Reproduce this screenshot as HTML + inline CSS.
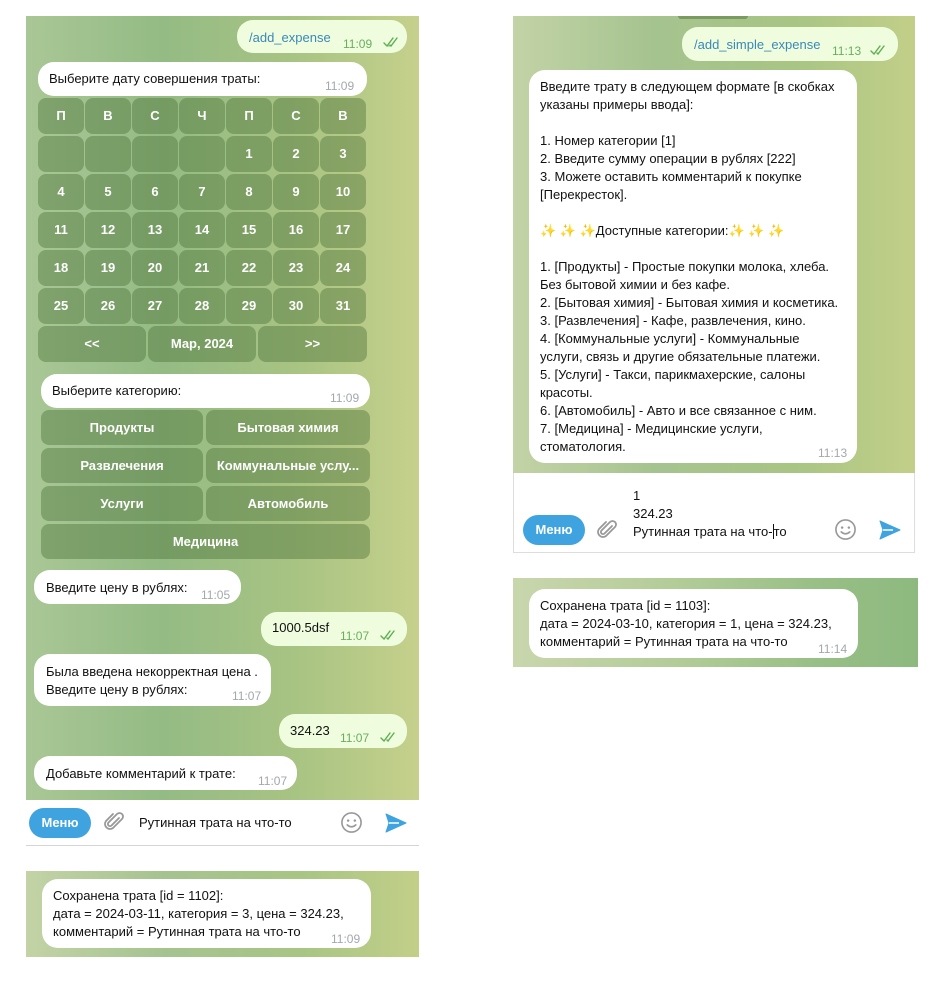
<!DOCTYPE html>
<html><head><meta charset="utf-8"><style>
*{margin:0;padding:0;box-sizing:border-box}
body{width:949px;height:987px;background:#fff;position:relative;overflow:hidden;font-family:"Liberation Sans","Noto Sans CJK SC",sans-serif;font-size:13px;color:#111}
.a{position:absolute}
.bg1{background:linear-gradient(90deg,#a9c796 0%,#94bb84 35%,#a9c483 70%,#c6d08c 100%)}
.bg2{background:linear-gradient(90deg,#c3d3a6 0%,#a5c38f 35%,#a8c584 70%,#c2cf88 100%)}
.bub{position:absolute;background:#fff;border-radius:16px;line-height:18px;padding:0 11px}
.out{background:#effdde}
.t{position:absolute;font-size:12px;color:#a3a8ad}
.to{color:#6aae5d}
.btn{position:absolute;background:rgba(74,112,56,.42);border-radius:8px;color:#fff;font-weight:bold;text-align:center;font-size:13px}
.chk{position:absolute}
.cmd{color:#3a88b8}
.menu{position:absolute;background:#3fa3e0;color:#fff;border-radius:16px;font-weight:bold;text-align:center;line-height:30px;font-size:13px}
</style></head><body>

<!-- LEFT PANEL -->
<div class="a bg1" style="left:26px;top:16px;width:393px;height:784px"></div>
<div class="bub out" style="left:237px;top:20px;width:170px;height:33px"><span class="cmd a" style="left:12px;top:9px">/add_expense</span><span class="t to" style="left:106px;top:15px">11:09</span><svg class="chk" style="left:146px;top:17px" width="16" height="10" viewBox="0 0 16 10"><path d="M1 6l3 3 6-8M6 9l0 0M7 8l1 1 6-8" fill="none" stroke="#5fae52" stroke-width="1.4" stroke-linecap="round"/></svg></div>
<div class="bub" style="left:38px;top:62px;width:329px;height:34px"><span class="a" style="left:11px;top:8px">Выберите дату совершения траты:</span><span class="t" style="left:287px;top:15px">11:09</span></div>

<div id="cal"></div>

<div class="bub" style="left:41px;top:374px;width:329px;height:34px"><span class="a" style="left:11px;top:8px">Выберите категорию:</span><span class="t" style="left:289px;top:15px">11:09</span></div>
<div class="btn" style="left:41px;top:410px;width:162px;height:35px;line-height:35px">Продукты</div>
<div class="btn" style="left:206px;top:410px;width:164px;height:35px;line-height:35px">Бытовая химия</div>
<div class="btn" style="left:41px;top:448px;width:162px;height:35px;line-height:35px">Развлечения</div>
<div class="btn" style="left:206px;top:448px;width:164px;height:35px;line-height:35px">Коммунальные услу...</div>
<div class="btn" style="left:41px;top:486px;width:162px;height:35px;line-height:35px">Услуги</div>
<div class="btn" style="left:206px;top:486px;width:164px;height:35px;line-height:35px">Автомобиль</div>
<div class="btn" style="left:41px;top:524px;width:329px;height:35px;line-height:35px">Медицина</div>

<div class="bub" style="left:34px;top:570px;width:207px;height:34px"><span class="a" style="left:12px;top:9px">Введите цену в рублях:</span><span class="t" style="left:167px;top:16px">11:05</span></div>
<div class="bub out" style="left:261px;top:612px;width:146px;height:34px"><span class="a" style="left:11px;top:7px">1000.5dsf</span><span class="t to" style="left:79px;top:15px">11:07</span><svg class="chk" style="left:119px;top:18px" width="16" height="10" viewBox="0 0 16 10"><path d="M1 6l3 3 6-8M7 8l1 1 6-8" fill="none" stroke="#5fae52" stroke-width="1.4" stroke-linecap="round"/></svg></div>
<div class="bub" style="left:34px;top:654px;width:237px;height:52px"><span class="a" style="left:12px;top:9px">Была введена некорректная цена .<br>Введите цену в рублях:</span><span class="t" style="left:198px;top:33px">11:07</span></div>
<div class="bub out" style="left:279px;top:714px;width:128px;height:34px"><span class="a" style="left:11px;top:8px">324.23</span><span class="t to" style="left:61px;top:15px">11:07</span><svg class="chk" style="left:101px;top:18px" width="16" height="10" viewBox="0 0 16 10"><path d="M1 6l3 3 6-8M7 8l1 1 6-8" fill="none" stroke="#5fae52" stroke-width="1.4" stroke-linecap="round"/></svg></div>
<div class="bub" style="left:34px;top:756px;width:263px;height:34px"><span class="a" style="left:12px;top:9px">Добавьте комментарий к трате:</span><span class="t" style="left:224px;top:16px">11:07</span></div>

<div class="a" style="left:26px;top:800px;width:393px;height:46px;background:#fff;border-bottom:1px solid #d5d5d5"></div>
<div class="menu" style="left:29px;top:808px;width:62px;height:30px">Меню</div>
<svg class="a" style="left:102px;top:810px" width="24" height="24" viewBox="0 0 24 24"><path d="M17 8l-7.5 7.5a2 2 0 0 1-3-3L15 4a3.5 3.5 0 0 1 5 5l-9 9a5 5 0 0 1-7-7l7-7" fill="none" stroke="#999" stroke-width="1.8" stroke-linecap="round"/></svg>
<span class="a" style="left:139px;top:815px">Рутинная трата на что-то</span>
<svg class="a" style="left:340px;top:811px" width="23" height="23" viewBox="0 0 24 24"><circle cx="12" cy="12" r="10" fill="none" stroke="#999" stroke-width="1.7"/><circle cx="8.5" cy="10" r="1.3" fill="#999"/><circle cx="15.5" cy="10" r="1.3" fill="#999"/><path d="M7.5 14.5q4.5 4 9 0" fill="none" stroke="#999" stroke-width="1.7" stroke-linecap="round"/></svg>
<svg class="a" style="left:384px;top:811px" width="24" height="24" viewBox="0 0 24 24"><path d="M2 3l20 9-20 9 3-9z" fill="#3fa3e0" stroke="#3fa3e0" stroke-width="1" stroke-linejoin="round"/><path d="M5 12h10" stroke="#fff" stroke-width="1.5"/></svg>

<div class="a bg2" style="left:26px;top:871px;width:393px;height:86px"></div>
<div class="bub" style="left:42px;top:879px;width:329px;height:69px"><span class="a" style="left:11px;top:8px">Сохранена трата [id = 1102]:<br>дата = 2024-03-11, категория = 3, цена = 324.23,<br>комментарий = Рутинная трата на что-то</span><span class="t" style="left:289px;top:51px">11:09</span></div>

<!-- RIGHT PANEL -->
<div class="a bg2" style="left:513px;top:16px;width:402px;height:457px"></div>
<div class="a" style="left:678px;top:16px;width:70px;height:3px;background:#7a9a62;border-radius:0 0 8px 8px"></div>
<div class="bub out" style="left:682px;top:27px;width:216px;height:34px"><span class="cmd a" style="left:12px;top:9px">/add_simple_expense</span><span class="t to" style="left:150px;top:15px">11:13</span><svg class="chk" style="left:188px;top:18px" width="16" height="10" viewBox="0 0 16 10"><path d="M1 6l3 3 6-8M7 8l1 1 6-8" fill="none" stroke="#5fae52" stroke-width="1.4" stroke-linecap="round"/></svg></div>
<div class="bub" style="left:529px;top:70px;width:328px;height:393px"><span class="a" style="left:11px;top:8px;white-space:nowrap">Введите трату в следующем формате [в скобках<br>указаны примеры ввода]:<br><br>1. Номер категории [1]<br>2. Введите сумму операции в рублях [222]<br>3. Можете оставить комментарий к покупке<br>[Перекресток].<br><br><span style="color:#f4c430">✨ ✨ ✨</span>Доступные категории:<span style="color:#f4c430">✨ ✨ ✨</span><br><br>1. [Продукты] - Простые покупки молока, хлеба.<br>Без бытовой химии и без кафе.<br>2. [Бытовая химия] - Бытовая химия и косметика.<br>3. [Развлечения] - Кафе, развлечения, кино.<br>4. [Коммунальные услуги] - Коммунальные<br>услуги, связь и другие обязательные платежи.<br>5. [Услуги] - Такси, парикмахерские, салоны<br>красоты.<br>6. [Автомобиль] - Авто и все связанное с ним.<br>7. [Медицина] - Медицинские услуги,<br>стоматология.</span><span class="t" style="left:289px;top:374px">11:13</span></div>

<div class="a" style="left:513px;top:473px;width:402px;height:80px;background:#fff;border:1px solid #ddd;border-top:none"></div>
<span class="a" style="left:633px;top:487px;line-height:18px">1<br>324.23<br>Рутинная трата на что-<span style="border-left:1px solid #111">то</span></span>
<div class="menu" style="left:523px;top:515px;width:62px;height:30px">Меню</div>
<svg class="a" style="left:595px;top:518px" width="24" height="24" viewBox="0 0 24 24"><path d="M17 8l-7.5 7.5a2 2 0 0 1-3-3L15 4a3.5 3.5 0 0 1 5 5l-9 9a5 5 0 0 1-7-7l7-7" fill="none" stroke="#999" stroke-width="1.8" stroke-linecap="round"/></svg>
<svg class="a" style="left:834px;top:518px" width="23" height="23" viewBox="0 0 24 24"><circle cx="12" cy="12" r="10" fill="none" stroke="#999" stroke-width="1.7"/><circle cx="8.5" cy="10" r="1.3" fill="#999"/><circle cx="15.5" cy="10" r="1.3" fill="#999"/><path d="M7.5 14.5q4.5 4 9 0" fill="none" stroke="#999" stroke-width="1.7" stroke-linecap="round"/></svg>
<svg class="a" style="left:878px;top:518px" width="24" height="24" viewBox="0 0 24 24"><path d="M2 3l20 9-20 9 3-9z" fill="#3fa3e0" stroke="#3fa3e0" stroke-width="1" stroke-linejoin="round"/><path d="M5 12h10" stroke="#fff" stroke-width="1.5"/></svg>

<div class="a" style="left:513px;top:578px;width:405px;height:89px;background:linear-gradient(90deg,#c9d6ad 0%,#b3cc98 40%,#98bf86 75%,#8db97f 100%)"></div>
<div class="bub" style="left:529px;top:589px;width:329px;height:69px"><span class="a" style="left:11px;top:8px">Сохранена трата [id = 1103]:<br>дата = 2024-03-10, категория = 1, цена = 324.23,<br>комментарий = Рутинная трата на что-то</span><span class="t" style="left:289px;top:51px">11:14</span></div>

<script>
var c=document.getElementById('cal'),h='';
var xs=[38,85,132,179,226,273,320],w=46;
var rows=[['П','В','С','Ч','П','С','В'],['','','','','1','2','3'],['4','5','6','7','8','9','10'],['11','12','13','14','15','16','17'],['18','19','20','21','22','23','24'],['25','26','27','28','29','30','31']];
for(var r=0;r<6;r++)for(var i=0;i<7;i++){h+='<div class="btn" style="left:'+xs[i]+'px;top:'+(98+r*38)+'px;width:'+w+'px;height:36px;line-height:36px">'+rows[r][i]+'</div>';}
h+='<div class="btn" style="left:38px;top:326px;width:108px;height:36px;line-height:36px">&lt;&lt;</div>';
h+='<div class="btn" style="left:148px;top:326px;width:108px;height:36px;line-height:36px">Мар, 2024</div>';
h+='<div class="btn" style="left:258px;top:326px;width:109px;height:36px;line-height:36px">&gt;&gt;</div>';
c.outerHTML=h;
</script>
</body></html>
